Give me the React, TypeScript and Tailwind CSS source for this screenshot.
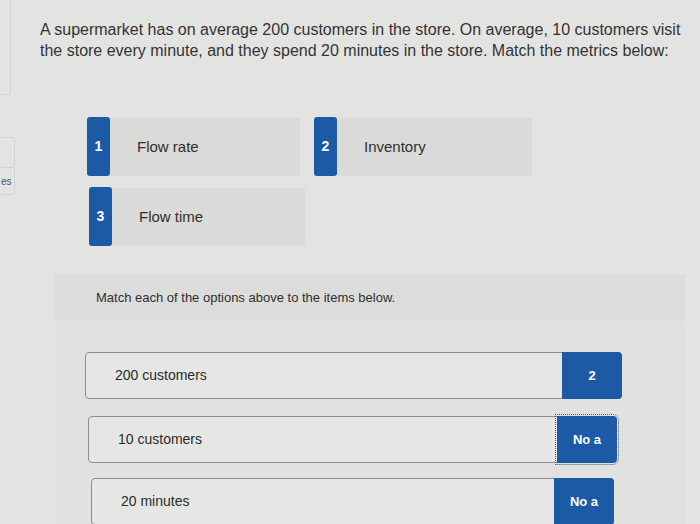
import React from 'react';

const font = { fontFamily: '"Liberation Sans", Arial, sans-serif' };

interface TileProps {
  num: string;
  label: string;
  className?: string;
}

const Tile: React.FC<TileProps> = ({ num, label, className = '' }) => (
  <div className={`flex h-[59px] ${className}`}>
    <div className="w-[23px] h-full rounded-[3px] bg-[#1c5aa6] flex items-center justify-center text-white font-bold text-[14px]">
      {num}
    </div>
    <div className="flex-1 h-[58px] mt-[1px] bg-[#dadbd8] flex items-center pl-[27px] text-[15px] text-[#2f2f2f]">
      {label}
    </div>
  </div>
);

interface RowProps {
  label: string;
  answer: string;
  focused?: boolean;
  className?: string;
}

const MatchRow: React.FC<RowProps> = ({ label, answer, focused, className = '' }) => (
  <div className={`flex h-[47px] rounded-[4px] border border-[#8e8f8d] bg-[#e6e7e4] ${className}`}>
    <div className="flex-1 flex items-center pl-[29px] text-[14px] text-[#2a2a2a]">{label}</div>
    <div
      className={`w-[60px] -my-px -mr-px rounded-r-[4px] bg-[#1c5aa6] flex items-center justify-center text-white font-bold text-[13px] ${
        focused ? 'outline outline-1 outline-dotted outline-[#555] outline-offset-[1px]' : ''
      }`}
    >
      {answer}
    </div>
  </div>
);

export default function App() {
  return (
    <div className="w-[700px] h-[524px] overflow-hidden bg-[#e3e4e2] flex" style={font}>
      <div className="w-[16px] shrink-0 flex flex-col">
        <div className="w-[11px] h-[95px] border-r border-b border-[#d2d3d1] rounded-br-[3px]" />
        <div className="w-[15px] h-[31px] mt-[42px] border border-l-0 border-[#d2d3d1] rounded-r-[3px]" />
        <div className="w-[15px] h-[27px] border border-l-0 border-t-0 border-[#d2d3d1] rounded-br-[3px] flex items-center pl-px text-[10px] text-[#3d5b80]">
          es
        </div>
      </div>

      <div className="flex-1 pl-[24px] pt-[19px] flex flex-col">
        <p className="text-[16px] leading-[21px] text-[#333] pr-[10px]">
          A supermarket has on average 200 customers in the store. On average, 10 customers visit the store every minute, and they spend 20 minutes in the store. Match the metrics below:
        </p>

        <div className="ml-[47px] mt-[56px] grid grid-cols-[213px_218px] gap-x-[14px] gap-y-[11px]">
          <Tile num="1" label="Flow rate" />
          <Tile num="2" label="Inventory" />
          <Tile num="3" label="Flow time" className="ml-[2px] w-[216px]" />
        </div>

        <div className="ml-[15px] mt-[28px] w-[630px] flex-1 bg-[#e1e2e0] flex flex-col">
          <div className="h-[47px] bg-[#dcdddb] flex items-center pl-[41px] text-[13px] text-[#2e2e2e]">
            Match each of the options above to the items below.
          </div>
          <div className="pt-[31px] flex flex-col gap-[17px]">
            <MatchRow label="200 customers" answer="2" className="ml-[30px] w-[537px]" />
            <MatchRow label="10 customers" answer="No a" focused className="ml-[33px] w-[529px]" />
            <MatchRow label="20 minutes" answer="No a" className="ml-[36px] w-[523px] -mt-[2px]" />
          </div>
        </div>
      </div>
    </div>
  );
}
